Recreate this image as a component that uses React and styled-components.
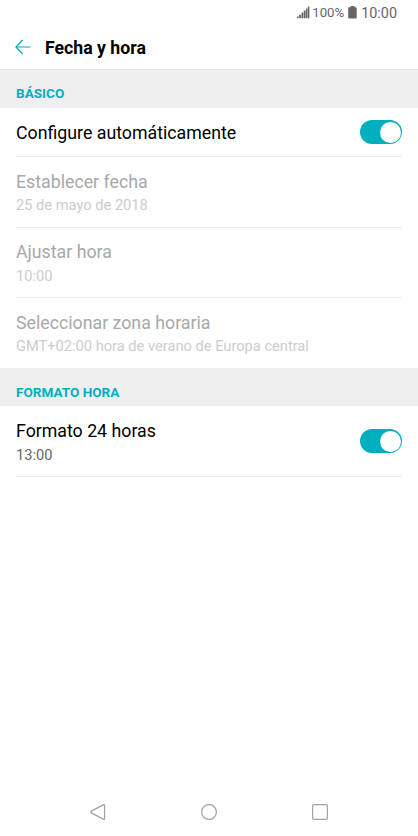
import React from 'react';
import styled, { createGlobalStyle } from 'styled-components';

const colors = {
    accent: '#00afbe',
    black: '#000000',
    gray1: '#666666',
    gray2: '#a8a8a8',
    gray3: '#cccccc',
    line: '#ececec',
    section: '#efefef',
};

const App = () => {
    return (
        <StyledPage>
            <GlobalStyle />
            <StatusBar />

            <StyledHeader>
                <BackIcon />
                <h1>Fecha y hora</h1>
            </StyledHeader>

            <main>
                <StyledSectionTitle $bordered>BÁSICO</StyledSectionTitle>
                <SettingRow title="Configure automáticamente" hasSwitch height={49} />
                <SettingRow title="Establecer fecha" value="25 de mayo de 2018" disabled height={71} />
                <SettingRow title="Ajustar hora" value="10:00" disabled height={70} top={11} gap={1} />
                <SettingRow title="Seleccionar zona horaria" value="GMT+02:00 hora de verano de Europa central" disabled last height={70} />

                <StyledSectionTitle>FORMATO HORA</StyledSectionTitle>
                <SettingRow title="Formato 24 horas" value="13:00" hasSwitch height={71} gap={1} />
            </main>

            <NavigationBar />
        </StyledPage>
    );
};

const StatusBar = () => (
    <StyledStatusBar>
        <svg className="signal" width="13" height="13" viewBox="0 0 13 13" fill={colors.gray1}>
            <path d="M0 10.5h1.7V12.3H0zM2.2 8.8h1.8v3.5H2.2zM4.5 6.5h1.8v5.8H4.5zM6.8 4.4h1.8v7.9H6.8zM9 2.4h1.5v9.9H9zM10.9 .5h1.5v11.8h-1.5z" />
        </svg>
        <span className="percent">100%</span>
        <svg className="battery" width="9" height="13" viewBox="0 0 9 13" fill={colors.gray1}>
            <path d="M2.5 0h4v1.3h1.3q.9 0 .9.9v9.4q0 .9-.9.9H1.1q-.9 0-.9-.9V2.2q0-.9.9-.9h1.4z" />
        </svg>
        <span className="clock">10:00</span>
    </StyledStatusBar>
);

const BackIcon = () => (
    <svg width="16" height="16" viewBox="0 0 16 16" fill="none" stroke={colors.accent} strokeWidth="1.2">
        <path d="M7.6 1L.9 8l6.7 7M.9 8h14.6" />
    </svg>
);

const SettingRow = ({ title, value, hasSwitch, disabled, last, height, top = 12, gap = 0 }) => (
    <StyledRow $height={height} $top={top} $gap={gap} $disabled={disabled} $last={last}>
        <div className="texts">
            <p className="title">{title}</p>
            {value && <p className="value">{value}</p>}
        </div>
        {hasSwitch && <StyledSwitch role="switch" aria-checked="true"><span /></StyledSwitch>}
    </StyledRow>
);

const NavigationBar = () => (
    <StyledNavigationBar>
        <svg width="18" height="18" viewBox="0 0 18 18">
            <path d="M14.6 1.6L2.4 8.1q-1.5.9 0 1.8l12.2 6.5q1 .4 1-.8V2.4q0-1.2-1-.8z" />
        </svg>
        <svg width="18" height="18" viewBox="0 0 18 18">
            <circle cx="9" cy="9" r="7.4" />
        </svg>
        <svg width="18" height="18" viewBox="0 0 18 18">
            <rect x="1.6" y="1.6" width="14.8" height="14.8" rx="1.2" />
        </svg>
    </StyledNavigationBar>
);

const GlobalStyle = createGlobalStyle`
    *{
        box-sizing: border-box;
        margin: 0;
        padding: 0;
    }

    body{
        background: #fff;
        font-family: Roboto, "Liberation Sans", sans-serif;
    }
`;

const StyledPage = styled.div`
    height: 836px;
    display: flex;
    flex-direction: column;
    background: #fff;

    main{
        flex: 1;
    }
`;

const StyledStatusBar = styled.div`
    height: 26px;
    padding: 0 21px 1px 0;
    display: flex;
    justify-content: flex-end;
    align-items: center;
    color: ${colors.gray1};
    line-height: 24px;

    .percent{
        margin-left: 2px;
        font-size: 13.2px;
    }

    .battery{
        margin-left: 4px;
    }

    .clock{
        margin-left: 4px;
        padding-top: 2px;
        font-size: 14.4px;
    }
`;

const StyledHeader = styled.header`
    height: 43px;
    padding: 0 0 1px 15px;
    display: flex;
    align-items: center;

    h1{
        margin-left: 14px;
        padding-top: 2px;
        font-weight: 700;
        font-size: 17.7px;
        line-height: 20px;
        color: ${colors.black};
    }
`;

const StyledSectionTitle = styled.h2`
    height: ${({ $bordered }) => $bordered ? 39 : 38}px;
    padding: 16px 16px 0;
    border-top: ${({ $bordered }) => $bordered ? '1px solid #e6e6e6' : 'none'};
    background: ${colors.section};
    font-weight: 700;
    font-size: 13.55px;
    line-height: ${({ $bordered }) => $bordered ? 15 : 16}px;
    color: ${colors.accent};
`;

const StyledRow = styled.div`
    height: ${({ $height }) => $height}px;
    margin: 0 16px;
    display: flex;
    justify-content: space-between;
    align-items: center;
    border-bottom: ${({ $last }) => $last ? 'none' : `1px solid ${colors.line}`};

    .texts{
        align-self: flex-start;
        padding-top: ${({ $top }) => $top}px;
    }

    .title{
        padding-top: 1px;
        font-size: 17.75px;
        line-height: 24px;
        color: ${({ $disabled }) => $disabled ? colors.gray2 : colors.black};
    }

    .value{
        padding-top: ${({ $gap }) => $gap}px;
        font-size: 14.65px;
        line-height: 22px;
        color: ${({ $disabled }) => $disabled ? colors.gray3 : colors.gray1};
    }
`;

const StyledSwitch = styled.div`
    width: 42px;
    height: 24px;
    padding: 1.5px;
    display: flex;
    justify-content: flex-end;
    border-radius: 12px;
    background: ${colors.accent};

    span{
        width: 21px;
        height: 21px;
        border-radius: 50%;
        background: #fff;
    }
`;

const StyledNavigationBar = styled.nav`
    height: 49px;
    padding: 0 89px;
    display: flex;
    justify-content: space-between;
    align-items: center;

    svg{
        fill: none;
        stroke: #a2a2a2;
        stroke-width: 1.2;
    }
`;

export default App;
